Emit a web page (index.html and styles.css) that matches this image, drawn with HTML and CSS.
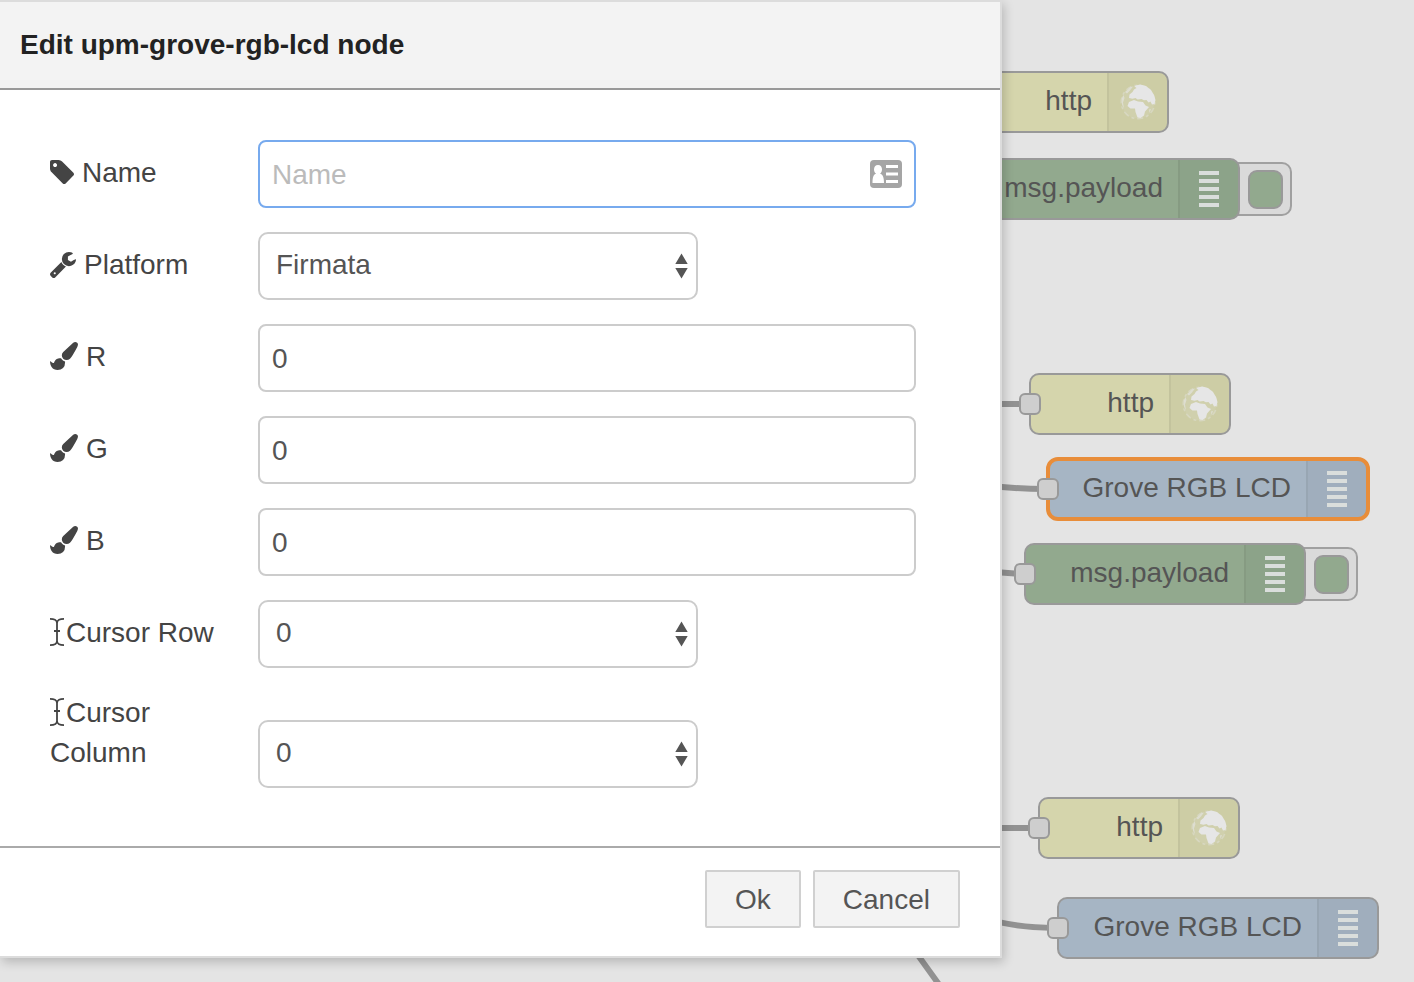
FILE: index.html
```html
<!DOCTYPE html>
<html lang="en">
<head>
<meta charset="utf-8">
<meta name="viewport" content="width=device-width, initial-scale=1">
<title>Edit upm-grove-rgb-lcd node</title>
<link rel="stylesheet" href="styles.css">
</head>
<body>
<svg class="symbols" aria-hidden="true">
  <symbol id="brush" viewBox="0 0 1792 1792"><path d="M1615 0q70 0 122.5 46.5t52.500 116.500q0 63-45 151-332 629-465 752-97 91-218 91-126 0-216.500-92.500t-90.500-219.500q0-128 92-212l638-579q59-54 130-54zm-909 1034q39 76 106.500 130t150.500 76l1 71q4 213-129.500 347t-348.500 134q-123 0-218-46.500t-152.500-127.500-86.500-183-29-220q7 5 41 30t62 44.500 59 36.500 46 17q41 0 55-37 25-66 57.500-112.500t69.500-76 88-47.500 103-25.500 125-10.500z"/></symbol>
  <symbol id="ibeam" viewBox="0 0 14 28"><path d="M0 .9C4 .9 7 2 7 5v18c0 3-3 4.100-7 4.100M14 .9C10 .9 7 2 7 5M14 27.100C10 27.100 7 26 7 23M4 13h6" fill="none" stroke="currentColor" stroke-width="1.800"/></symbol>
  <symbol id="updown" viewBox="0 0 13 26"><path d="M6.500 0.500L12.700 11H.3zM.3 15h12.400L6.500 25.500z"/></symbol>
  <symbol id="globe" viewBox="0 0 36 36">
    <circle cx="18" cy="18" r="16.500" opacity=".12"/>
    <circle cx="18" cy="18" r="16.800" fill="none" stroke="currentColor" stroke-width="1.500" stroke-dasharray="3 3 6 3" opacity=".4"/>
    <path d="M16 1.500L20 .5l6 1.500 5 4 3 5 1.500 5-1 4-2.500.5-1.500-3-2 1-2-2.500-2.500.3-2.500-1.300-4 .5-2-1.500-3 .8-3.500-.8.500-3.500 3-2.500 1.500-2.500 2.500-1.500-2-1.500z"/>
    <path d="M9 18l5-2 4 1.500 5 .5 2.500 3.500 3.500 1.500-4 4.500-1 4-3.500 2.500-3-.5-2-5.500-.5-3.500-4.500 0L7.500 22z"/>
    <path d="M2 14l1.500-3 1 3-1.500 4.500 1 6-2-4zM5 8l5-4.500 3-1-3 4-3 3zM29 25.500l2-.5-1.500 4z" opacity=".6"/>
  </symbol>
  <symbol id="lines" viewBox="0 0 20 36"><path d="M0 0h20v4H0zM0 8h20v4H0zM0 16h20v4H0zM0 24h20v4H0zM0 32h20v4H0z"/></symbol>
</svg>

<div class="workspace">
  <svg class="wires" aria-hidden="true">
    <path d="M980 404H1028M980 484Q1010 489 1046 489M980 570Q1000 573 1024 574M980 828H1036M980 917Q1014 928 1056 928M900 932Q920 957 940 986"/>
  </svg>

  <div class="node http n1"><span class="node-label">http</span><span class="node-icon"><svg class="i-globe"><use href="#globe"/></svg></span></div>

  <div class="debug-toggle t1"><button type="button" aria-label="Toggle debug output"></button></div>
  <div class="node debug n2"><span class="node-label">msg.payload</span><span class="node-icon"><svg class="i-lines"><use href="#lines"/></svg></span></div>

  <div class="node http n3"><i class="port"></i><span class="node-label">http</span><span class="node-icon"><svg class="i-globe"><use href="#globe"/></svg></span></div>

  <div class="node lcd selected n4"><i class="port"></i><span class="node-label">Grove RGB LCD</span><span class="node-icon"><svg class="i-lines"><use href="#lines"/></svg></span></div>

  <div class="debug-toggle t2"><button type="button" aria-label="Toggle debug output"></button></div>
  <div class="node debug n5"><i class="port"></i><span class="node-label">msg.payload</span><span class="node-icon"><svg class="i-lines"><use href="#lines"/></svg></span></div>

  <div class="node http n6"><i class="port"></i><span class="node-label">http</span><span class="node-icon"><svg class="i-globe"><use href="#globe"/></svg></span></div>

  <div class="node lcd n7"><i class="port"></i><span class="node-label">Grove RGB LCD</span><span class="node-icon"><svg class="i-lines"><use href="#lines"/></svg></span></div>
</div>

<form class="dialog" role="dialog" aria-labelledby="dialog-title">
  <header class="dialog-header"><h1 id="dialog-title">Edit upm-grove-rgb-lcd node</h1></header>

  <div class="dialog-body">
    <div class="row">
      <label for="name"><svg class="icon i-tag" viewBox="128 128 1515 1515"><path d="M576 448q0-53-37.500-90.500t-90.500-37.500-90.500 37.500-37.500 90.500 37.500 90.500 90.500 37.500 90.500-37.500 37.500-90.500zm1067 576q0 53-37 90l-491 492q-39 37-91 37-53 0-90-37l-715-716q-38-37-64.500-101t-26.500-117v-416q0-52 38-90t90-38h416q53 0 117 26.500t102 64.500l715 714q37 39 37 91z"/></svg>Name</label>
      <div class="field">
        <input id="name" class="focused" type="text" placeholder="Name">
        <svg class="card" viewBox="0 0 32 28"><rect width="32" height="28" rx="4" fill="#a5a5a5"/><path d="M8 5c2.600 0 4 1.900 4 4.400 0 1.800-.8 3.400-2 4.200 2.600.8 4 3.600 4 9.400H2.500c0-5.800 1.200-8.600 3.600-9.400C4.800 12.800 4 11.200 4 9.400 4 6.900 5.400 5 8 5zM16 5h12v3H16zM16 12.500h12v3H16zM16 20h12v3H16z" fill="#fff"/></svg>
      </div>
    </div>
    <div class="row">
      <label for="platform"><svg class="icon i-wrench" viewBox="85 128 1641 1643"><path d="M448 1472q0-26-19-45t-45-19-45 19-19 45 19 45 45 19 45-19 19-45zm644-420l-682 682q-37 37-90 37-52 0-91-37l-106-108q-38-36-38-90 0-53 38-91l681-681q39 98 114.500 173.500t173.500 114.500zm634-435q0 39-23 106-47 134-164.500 217.500t-258.500 83.500q-185 0-316.500-131.500t-131.500-316.500 131.500-316.500 316.500-131.500q58 0 121.500 16.500t107.500 46.500q16 11 16 28t-16 28l-293 169v224l193 107q5-3 79-48.500t135.500-81 70.500-35.500q15 0 23.500 10t8.500 25z"/></svg>Platform</label>
      <div class="field short">
        <select id="platform"><option>Firmata</option></select>
        <svg class="arrows"><use href="#updown"/></svg>
      </div>
    </div>
    <div class="row">
      <label for="red"><svg class="icon i-brush"><use href="#brush"/></svg>R</label>
      <div class="field"><input id="red" type="text" value="0"></div>
    </div>
    <div class="row">
      <label for="green"><svg class="icon i-brush"><use href="#brush"/></svg>G</label>
      <div class="field"><input id="green" type="text" value="0"></div>
    </div>
    <div class="row">
      <label for="blue"><svg class="icon i-brush"><use href="#brush"/></svg>B</label>
      <div class="field"><input id="blue" type="text" value="0"></div>
    </div>
    <div class="row">
      <label for="cursor-row"><svg class="icon i-beam"><use href="#ibeam"/></svg>Cursor Row</label>
      <div class="field short">
        <select id="cursor-row"><option>0</option><option>1</option></select>
        <svg class="arrows"><use href="#updown"/></svg>
      </div>
    </div>
    <div class="row">
      <label for="cursor-column"><svg class="icon i-beam"><use href="#ibeam"/></svg>Cursor Column</label>
      <div class="field short">
        <select id="cursor-column"><option>0</option><option>1</option></select>
        <svg class="arrows"><use href="#updown"/></svg>
      </div>
    </div>
  </div>

  <footer class="dialog-footer">
    <button type="button">Ok</button>
    <button type="button">Cancel</button>
  </footer>
</form>
</body>
</html>
```
FILE: styles.css
```css
* { box-sizing: border-box; }

body {
  margin: 0;
  min-height: 100vh;
  position: relative;
  overflow: hidden;
  background: #e4e4e4;
  color: #444;
  font: 28px/40px "Helvetica Neue", "Liberation Sans", Arial, sans-serif;
}

input, select, button { font: inherit; color: #555; }
svg { fill: currentColor; }
.symbols { position: absolute; width: 0; height: 0; }

/* Dialog */
.dialog {
  position: relative;
  width: 100%;
  max-width: 1002px;
  background: #fff;
  border: 2px solid #dcdcdc;
  border-left: 0;
  box-shadow: 2px 4px 10px rgba(0, 0, 0, .2);
}
.dialog-header {
  padding: 23px 20px;
  background: #f3f3f3;
  border-bottom: 2px solid #999;
}
.dialog-header h1 { margin: 0; font-size: 28px; line-height: 40px; color: #222; }
.dialog-body {
  display: flex;
  flex-direction: column;
  gap: 24px;
  padding: 50px 84px 58px 50px;
}
.row { display: flex; align-items: flex-end; }
.row label { flex: 0 0 208px; padding: 1px 40px 15px 0; }
.icon { display: inline-block; margin-right: 8px; }
.i-tag { width: 24px; height: 24px; vertical-align: -2px; }
.i-wrench { width: 26px; height: 26px; vertical-align: -4px; }
.i-brush { width: 28px; height: 28px; vertical-align: -4px; }
.i-beam { width: 14px; height: 28px; margin-right: 2px; vertical-align: -4px; }

.field { position: relative; flex: 1; min-width: 0; }
.field.short { flex: 0 1 440px; }
.field input, .field select {
  display: block;
  width: 100%;
  height: 68px;
  border: 2px solid #ccc;
  border-radius: 8px;
  background: #fff;
  outline: 0;
}
.field input { padding: 2px 12px 0; }
.field input.focused { border-color: #77aaee; padding-right: 56px; }
.field input::placeholder { color: #bbb; opacity: 1; }
.field select { appearance: none; padding: 0 40px 2px 16px; border-radius: 10px; }
.card { position: absolute; right: 14px; top: 20px; width: 32px; height: 28px; }
.arrows {
  position: absolute;
  right: 10px;
  top: 21px;
  width: 13px;
  height: 26px;
  color: #555;
  pointer-events: none;
}

.dialog-footer {
  display: flex;
  justify-content: flex-end;
  gap: 12px;
  padding: 22px 40px 28px;
  border-top: 2px solid #aaa;
}
.dialog-footer button {
  height: 58px;
  padding: 2px 28px 0;
  border: 2px solid #d0d0d0;
  border-radius: 2px;
  background: #f3f3f3;
}

/* Flow canvas */
.workspace { position: absolute; inset: 0; overflow: hidden; color: #555; }
.wires { position: absolute; inset: 0; width: 100%; height: 100%; }
.wires path { fill: none; stroke: #929292; stroke-width: 6; }

.node {
  position: absolute;
  display: flex;
  justify-content: flex-end;
  height: 62px;
  border: 2px solid #999;
  border-radius: 10px;
  white-space: nowrap;
}
.node.http { width: 202px; background: #d5d5ac; }
.node.debug { width: 282px; background: #92a98e; }
.node.lcd { width: 322px; background: #a6b5c4; }
.node.selected { width: 324px; height: 64px; border: 4px solid #e88d3a; border-radius: 12px; }
.node-label { padding: 8px 15px 0 0; }
.node-icon {
  flex: 0 0 60px;
  display: flex;
  align-items: center;
  justify-content: center;
  border-left: 2px solid rgba(0, 0, 0, .05);
  border-radius: 0 8px 8px 0;
  background: rgba(0, 0, 0, .035);
  color: #e6e6e6;
}
.node.selected .node-label { padding-top: 7px; }
.i-globe { width: 36px; height: 36px; }
.i-lines { width: 20px; height: 36px; color: #dadedc; }
.port {
  position: absolute;
  left: -12px;
  top: 18px;
  width: 22px;
  height: 22px;
  border: 2px solid #999;
  border-radius: 6px;
  background: #cecece;
}
.selected .port { left: -13px; top: 17px; }

.debug-toggle {
  position: absolute;
  width: 72px;
  height: 54px;
  padding: 6px 7px;
  display: flex;
  justify-content: flex-end;
  border: 2px solid #a0a0a0;
  border-radius: 10px;
  background: #dadada;
}
.debug-toggle button {
  width: 35px;
  height: 39px;
  padding: 0;
  border: 2px solid #999;
  border-radius: 9px;
  background: #92a98e;
}

/* Positions of the nodes on the canvas */
.n1 { left: 967px; top: 71px; }
.n2 { left: 958px; top: 158px; }
.t1 { left: 1220px; top: 162px; }
.n3 { left: 1029px; top: 373px; }
.n4 { left: 1046px; top: 457px; }
.n5 { left: 1024px; top: 543px; }
.t2 { left: 1286px; top: 547px; }
.n6 { left: 1038px; top: 797px; }
.n7 { left: 1057px; top: 897px; }
```
